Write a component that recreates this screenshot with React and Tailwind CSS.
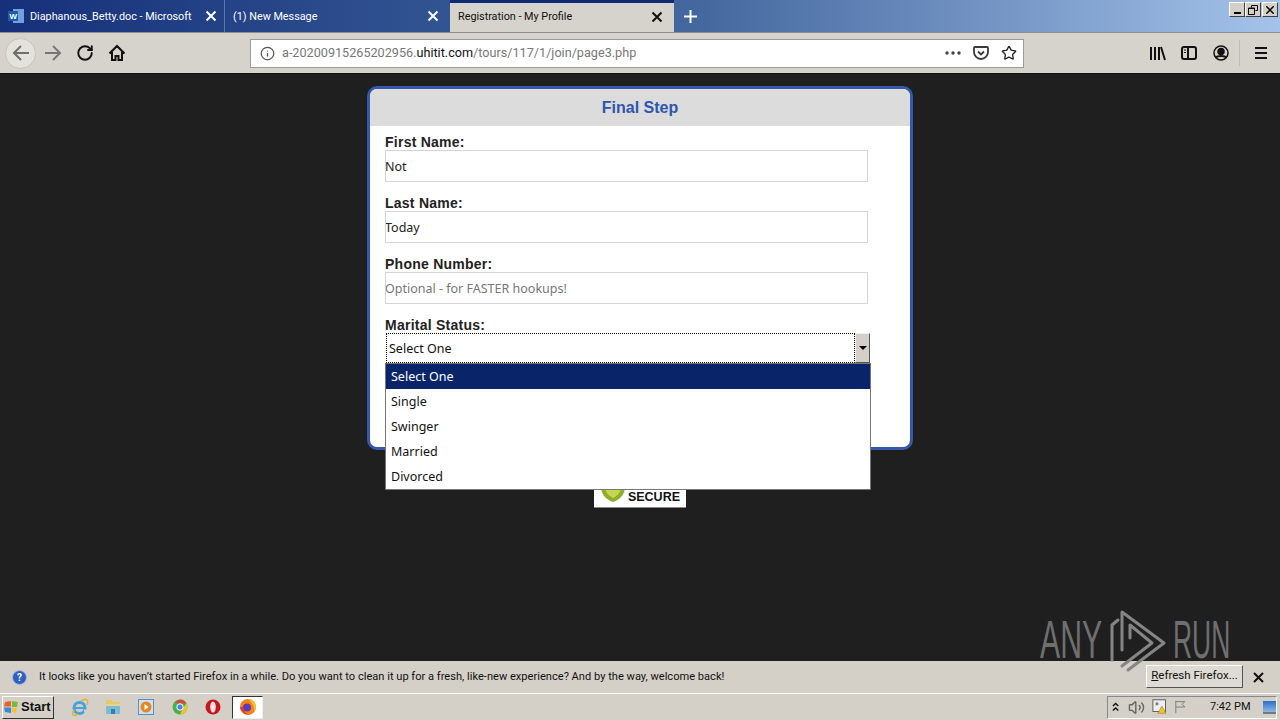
import React from 'react';
import { RotateCw, Info, Star, Volume2 } from 'lucide-react';

const ui = "font-['Noto_Sans','Liberation_Sans',sans-serif]";
const chrome = "font-['Roboto','Liberation_Sans',sans-serif]";

const TabClose = ({ dark }) => (
    <svg width="12" height="12" viewBox="0 0 12 12" className={dark ? 'text-[#111]' : 'text-white'}>
        <path d="M1.5 1.5l9 9M10.5 1.5l-9 9" stroke="currentColor" strokeWidth="2" />
    </svg>
);

const WordIcon = () => (
    <svg width="16" height="16" viewBox="0 0 16 16">
        <rect x="5" y="1" width="11" height="14" fill="#6ea3de" />
        <rect x="0" y="3" width="10" height="10" fill="#1c5db0" />
        <text x="1.5" y="11" fontSize="8" fontWeight="700" fill="#fff" fontFamily="Liberation Sans">W</text>
    </svg>
);

const Arrow = ({ flip, color }) => (
    <svg width="20" height="20" viewBox="0 0 20 20" fill="none" stroke={color} strokeWidth="2" className={flip ? 'rotate-180' : ''}>
        <path d="M18 10H3M10 3l-7 7 7 7" />
    </svg>
);

const HomeIcon = () => (
    <svg width="18" height="18" viewBox="0 0 18 18" fill="none" stroke="#111" strokeWidth="2">
        <path d="M1.5 9.5L9 2l7.5 7.5M4 8v8h3.5v-4h3v4H14V8" />
    </svg>
);

const PocketIcon = () => (
    <svg width="16" height="16" viewBox="0 0 16 16" fill="none" stroke="#3a3a3a" strokeWidth="1.8">
        <path d="M2 2h12a1 1 0 0 1 1 1v4a7 7 0 0 1-14 0V3a1 1 0 0 1 1-1z" />
        <path d="M5 6.5l3 3 3-3" />
    </svg>
);

const LibraryIcon = () => (
    <svg width="17" height="16" viewBox="0 0 17 16" fill="none" stroke="#111" strokeWidth="2">
        <path d="M2 2v13M6 2v13M10 2v13M12 2l4 13" />
    </svg>
);

const SidebarIcon = () => (
    <svg width="16" height="14" viewBox="0 0 16 14" fill="none" stroke="#111" strokeWidth="2">
        <rect x="1" y="1" width="14" height="12" rx="2" />
        <path d="M7 1v12" />
        <path d="M3 4h2M3 6.5h2" strokeWidth="1" />
    </svg>
);

const AccountIcon = () => (
    <svg width="16" height="16" viewBox="0 0 16 16" fill="none" stroke="#111" strokeWidth="1.5">
        <circle cx="8" cy="8" r="7" />
        <circle cx="8" cy="6.5" r="3" fill="#111" />
        <path d="M3 12.5c1.5-2 8.500-2 10 0" strokeWidth="2" />
    </svg>
);

const MenuIcon = () => (
    <svg width="14" height="12" viewBox="0 0 14 12" stroke="#111" strokeWidth="2">
        <path d="M1 1h12M1 6h12M1 11h12" />
    </svg>
);

const WinBtn = ({ children, close }) => (
    <div className={`w-4 h-[15px] bg-[#d4d0c8] border border-t-white border-l-white border-r-[#404040] border-b-[#404040] flex items-center justify-center ${close ? 'ml-px' : ''}`}>
        {children}
    </div>
);

const Field = ({ label, value, placeholder }) => (
    <div className="mb-[13px]">
        <div className="h-4 text-[14px] leading-4 font-bold tracking-[0.25px] text-[#222] font-['Liberation_Sans',sans-serif]">{label}</div>
        <input
            readOnly
            defaultValue={value}
            placeholder={placeholder}
            className={`${ui} block w-[483px] h-8 bg-white border border-[#d5d5d5] text-[12.500px] indent-[-1px] text-[#222] placeholder:text-[#777] outline-none`}
        />
    </div>
);

const options = ['Select One', 'Single', 'Swinger', 'Married', 'Divorced'];

const IeIcon = () => (
    <svg width="19" height="19" viewBox="0 0 19 19" fill="none">
        <circle cx="9.500" cy="10" r="5.500" stroke="#45a2de" strokeWidth="3" />
        <path d="M5 10h9" stroke="#45a2de" strokeWidth="2" />
        <path d="M14 13h2" stroke="#d4d0c8" strokeWidth="3" />
        <path d="M4 12C1 17 3 19 8 16M11 3c5-3 8-2 6 4" stroke="#dfb43a" strokeWidth="1.500" />
    </svg>
);

const FolderIcon = () => (
    <svg width="16" height="16" viewBox="0 0 16 16">
        <path d="M1 1h6l1 2h7v12H1z" fill="#e8c966" />
        <rect x="1" y="5" width="14" height="10" fill="#7dbcd8" />
        <rect x="1" y="5" width="14" height="2" fill="#e8d58c" />
        <rect x="6" y="10" width="4" height="5" fill="#3d7f9e" />
    </svg>
);

const MediaIcon = () => (
    <svg width="16" height="16" viewBox="0 0 16 16">
        <rect x="0.500" y="0.500" width="15" height="15" fill="#cfe0f2" stroke="#5c8fc8" />
        <circle cx="8" cy="8" r="5.500" fill="#e8861e" />
        <path d="M6.500 5l4 3-4 3z" fill="#fff" />
    </svg>
);

const ChromeIcon = () => (
    <svg width="16" height="16" viewBox="0 0 16 16">
        <circle cx="8" cy="8" r="7.500" fill="#4caf50" />
        <path d="M8 .5A7.500 7.500 0 0 1 14.500 4.500H8L3 4A7.500 7.500 0 0 1 8 .5z" fill="#d9483b" />
        <path d="M14.500 4.500A7.500 7.500 0 0 1 8 15.500L11 9z" fill="#f2c230" />
        <circle cx="8" cy="8" r="3.200" fill="#4a87d9" stroke="#fff" />
    </svg>
);

const OperaIcon = () => (
    <svg width="16" height="16" viewBox="0 0 16 16">
        <circle cx="8" cy="8" r="7.500" fill="#c8161d" />
        <ellipse cx="8" cy="8" rx="2.800" ry="5.500" fill="#fbe3e3" />
    </svg>
);

const FirefoxIcon = () => (
    <svg width="18" height="18" viewBox="0 0 18 18">
        <circle cx="9" cy="9" r="8" fill="#f5811f" />
        <path d="M9 1a8 8 0 0 1 8 8c0 2-1 4-2 5 1-4-1-8-6-13z" fill="#fbc02d" />
        <circle cx="8" cy="9.500" r="4" fill="#5c3bb5" />
        <path d="M1 9c1 5 5 8 10 7.500C7 16 4 13 4 9z" fill="#e8372c" />
    </svg>
);

const App = () => {
    return (
        <div className={`${chrome} relative flex flex-col w-[1280px] h-[720px] overflow-hidden bg-[#1f1f1f]`}>
            {/* tab strip */}
            <div className="flex h-8 shrink-0 bg-gradient-to-r from-[#16307a] via-[#45689f] via-[55%] to-[#a5c3ea]">
                <div className="flex items-center w-[225px] pl-2 pr-[5px] border-r border-[#5a76ae] text-white text-[10.800px]">
                    <WordIcon />
                    <span className="ml-[6px] pt-[2px] whitespace-nowrap">Diaphanous_Betty.doc - Microsoft</span>
                    <span className="ml-auto mr-0.5"><TabClose /></span>
                </div>
                <div className="flex items-center w-[225px] pl-[8px] pr-[11px] text-white text-[10.800px]">
                    <span className="pt-[2px]">(1) New Message</span>
                    <span className="ml-auto"><TabClose /></span>
                </div>
                <div className="flex items-center w-[224px] pl-2 pr-[11px] bg-[#d6d3cc] border-t-[3px] border-t-[#0f2a73] text-[#111] text-[10.800px]">
                    <span>Registration - My Profile</span>
                    <span className="ml-auto -mt-[2px]"><TabClose dark /></span>
                </div>
                <div className="flex items-center ml-[9px] text-white">
                    <svg width="15" height="15" viewBox="0 0 15 15" stroke="#fff" strokeWidth="2"><path d="M7.500 1v13M1 7.500h13" /></svg>
                </div>
                <div className="flex ml-auto mr-[2px] mt-[2px] h-[15px]">
                    <WinBtn><span className="block w-[7px] h-[2px] mt-[7px] bg-black" /></WinBtn>
                    <WinBtn>
                        <svg width="10" height="10" viewBox="0 0 10 10" fill="none" stroke="#000"><path d="M3.500 2.500V.5h6v5h-2" /><path d="M.5 3h6v6.500h-6z" /><path d="M.5 3.500h6" /></svg>
                    </WinBtn>
                    <WinBtn close>
                        <svg width="8" height="8" viewBox="0 0 8 8" stroke="#000" strokeWidth="1.500"><path d="M0 0l8 8M8 0L0 8" /></svg>
                    </WinBtn>
                </div>
            </div>

            {/* nav bar */}
            <div className="flex items-center h-[42px] shrink-0 bg-[#d6d3cc] border-t border-[#8f8f8f] border-b border-b-[#111]">
                <div className="flex items-center justify-center ml-[5px] w-[31px] h-[31px] rounded-full bg-[#e4e2dc] border border-[#c6c3bc]">
                    <Arrow color="#6e6e6e" />
                </div>
                <div className="ml-[7px]"><Arrow flip color="#777" /></div>
                <div className="ml-[13px]"><RotateCw size={18} strokeWidth={2.500} color="#111" /></div>
                <div className="ml-[14px]"><HomeIcon /></div>
                <div className="flex items-center ml-[124px] w-[774px] h-[29px] bg-white border border-[#9a9a9a] pl-[9px] pr-[6px] text-[12.650px]">
                    <Info size={15} color="#555" />
                    <span className="ml-[7px] text-[#777] whitespace-nowrap">a-20200915265202956.<span className="text-[#111]">uhitit.com</span>/tours/117/1/join/page3.php</span>
                    <div className="flex items-center ml-auto">
                        <svg width="16" height="4" viewBox="0 0 16 4" fill="#444"><circle cx="2" cy="2" r="1.700" /><circle cx="8" cy="2" r="1.700" /><circle cx="14" cy="2" r="1.700" /></svg>
                        <span className="ml-[12px]"><PocketIcon /></span>
                        <span className="ml-[12px]"><Star size={16} strokeWidth={2} color="#222" /></span>
                    </div>
                </div>
                <div className="ml-[125px]"><LibraryIcon /></div>
                <div className="ml-[15px]"><SidebarIcon /></div>
                <div className="ml-4"><AccountIcon /></div>
                <div className="ml-[10px] w-px h-[26px] bg-[#c2bfb8]" />
                <div className="ml-[14px]"><MenuIcon /></div>
            </div>

            {/* page */}
            <div className={`${ui} relative flex-1 flex flex-col items-center pt-[12px] bg-[#1f1f1f]`}>
                <div className="w-[546px] h-[364px] bg-white border-[3px] border-[#3558ad] rounded-[10px] overflow-hidden">
                    <div className="h-[37px] flex items-center justify-center bg-[#dcdcdc] text-[16px] font-bold text-[#2f56ae] font-['Liberation_Sans',sans-serif]">Final Step</div>
                    <div className="pt-2 pl-[15px]">
                        <Field label="First Name:" value="Not" />
                        <Field label="Last Name:" value="Today" />
                        <Field label="Phone Number:" placeholder="Optional - for FASTER hookups!" />
                        <div className="h-4 text-[14px] leading-4 font-bold tracking-[0.25px] text-[#222] font-['Liberation_Sans',sans-serif]">Marital Status:</div>
                        <div className="flex ml-px w-[484px] h-[30px] text-[12.500px] text-[#111]">
                            <div className="flex-1 flex items-center pl-[2px] pt-[2px] border border-dotted border-black">Select One</div>
                            <div className="w-[15px] flex items-center justify-center bg-[#d4d0c8] border border-t-[#eee] border-l-[#eee] border-r-[#555] border-b-[#555]">
                                <span className="w-0 h-0 border-x-4 border-x-transparent border-t-4 border-t-black" />
                            </div>
                        </div>
                    </div>
                </div>
                <div className="flex items-center justify-end w-[92px] h-[30px] mt-[28px] pr-[6px] pt-[10px] bg-white border-b border-[#888] text-[12.500px] font-bold text-[#111] font-['Liberation_Sans',sans-serif]">
                    SECURE
                </div>
                <svg width="26" height="14" viewBox="0 0 26 14" className="absolute left-[600px] top-[414px]">
                    <path d="M1 0h24c-1 8-6 12-12 14C7 12 2 8 1 0z" fill="#8fae2e" />
                    <path d="M5 0h16c-1 5-4 8-8 10C9 8 6 5 5 0z" fill="#c4d84f" />
                </svg>

                {/* open select list */}
                <div className="absolute left-[385px] top-[289px] w-[486px] h-[127px] bg-white border border-[#777] text-[12.500px] text-[#111]">
                    {options.map((opt, i) => (
                        <div key={opt} className={`flex items-center h-[25px] pl-[5px] pt-[2px] ${i === 0 ? 'bg-[#0a246a] text-white' : ''}`}>{opt}</div>
                    ))}
                </div>
            </div>

            {/* notification bar */}
            <div className="flex items-center h-8 shrink-0 bg-[#d4d0c8] text-[11.100px] text-[#111]">
                <span className="flex items-center justify-center ml-3 w-[15px] h-[15px] rounded-full bg-[#2f5fbf] border border-[#a9bfe6] text-white text-[10px] font-bold">?</span>
                <span className="ml-3">It looks like you haven’t started Firefox in a while. Do you want to clean it up for a fresh, like-new experience? And by the way, welcome back!</span>
                <div className="ml-auto -mt-[2px] flex items-center justify-center w-[97px] h-[23px] text-[11.500px] bg-[#dedbd4] border border-t-white border-l-white border-r-[#555] border-b-[#555]">
                    <span><span className="underline">R</span>efresh Firefox...</span>
                </div>
                <span className="ml-[10px] mr-[16px]">
                    <svg width="11" height="11" viewBox="0 0 11 11" stroke="#111" strokeWidth="2"><path d="M1 1l9 9M10 1l-9 9" /></svg>
                </span>
            </div>

            {/* taskbar */}
            <div className="flex items-center h-[27px] shrink-0 bg-[#d4d0c8] border-t border-white text-[#111]">
                <div className="flex items-center ml-[2px] w-[52px] h-[23px] bg-[#d4d0c8] border border-t-white border-l-white border-r-[#333] border-b-[#333] pl-px text-[13px] font-bold font-['Liberation_Sans',sans-serif]">
                    <svg width="15" height="14" viewBox="0 0 15 14">
                        <path d="M1 2l6-1v5.500H0z" fill="#e8622a" />
                        <path d="M8 1l6 1-1 5H8z" fill="#7cb83d" />
                        <path d="M0 7.500h7V13l-6-1z" fill="#3d86d9" />
                        <path d="M8 8h5l-1 5-4-1z" fill="#f2c230" />
                    </svg>
                    <span className="ml-[2px]">Start</span>
                </div>
                <div className="ml-[16px]"><IeIcon /></div>
                <div className="ml-4"><FolderIcon /></div>
                <div className="ml-[17px]"><MediaIcon /></div>
                <div className="ml-[18px]"><ChromeIcon /></div>
                <div className="ml-[17px]"><OperaIcon /></div>
                <div className="flex items-center justify-center ml-[11px] w-[31px] h-[23px] bg-white border border-t-[#333] border-l-[#333] border-r-[#eee] border-b-[#eee]">
                    <FirefoxIcon />
                </div>
                <div className="flex items-center ml-auto mr-[3px] w-[170px] h-[23px] border border-t-[#888] border-l-[#888] border-r-white border-b-white text-[11px]">
                    <svg width="8" height="10" viewBox="0 0 8 10" fill="none" stroke="#111" strokeWidth="1.500" className="ml-[4px]"><path d="M1 4l3-3 3 3M1 9l3-3 3 3" /></svg>
                    <span className="ml-[9px]"><Volume2 size={17} color="#666" /></span>
                    <svg width="18" height="18" viewBox="0 0 18 18" className="ml-[7px]">
                        <rect x="1" y="1" width="14" height="13" fill="#eee" stroke="#555" />
                        <path d="M4 4h3v3H4z" fill="#777" />
                        <path d="M11 8l-4.500 8h9z" fill="#f2c230" stroke="#7a6200" strokeWidth="0.500" />
                    </svg>
                    <svg width="14" height="16" viewBox="0 0 14 16" fill="none" stroke="#777" className="ml-[6px]"><path d="M2 1v14M2 2h10l-3 3 3 3H2" /></svg>
                    <span className="ml-[23px] whitespace-nowrap">7:42 PM</span>
                    <span className="ml-[12px] w-[15px] h-[13px] bg-gradient-to-b from-[#2b6fc4] to-[#8ab8e8] border-b-2 border-[#777]" />
                </div>
            </div>

            {/* watermark */}
            <div className="absolute left-[1038px] top-[606px] w-[200px] h-[70px] text-[#6f6f6f] font-['Liberation_Sans',sans-serif] pointer-events-none">
                <span className="absolute left-[2px] top-[2px] text-[54px] leading-[62px] scale-x-[0.56] origin-left">ANY</span>
                <svg width="62" height="70" viewBox="0 0 62 70" fill="none" stroke="#858585" strokeWidth="3" strokeLinejoin="round" strokeLinecap="round" className="absolute left-[70px] top-0">
                    <path d="M14 44V6l42 31-36 27" />
                    <path d="M22 32V19l22 18-30 23" />
                    <path d="M10 14l-6 5v35" />
                </svg>
                <span className="absolute left-[135px] top-[2px] text-[54px] leading-[62px] scale-x-[0.49] origin-left">RUN</span>
            </div>
        </div>
    );
};

export default App;
